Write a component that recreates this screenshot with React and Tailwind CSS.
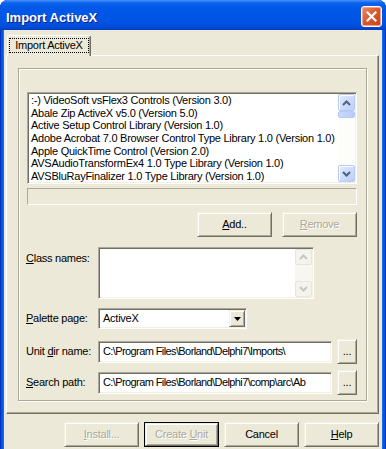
import React from "react";

const RAISED =
  "border border-t-[#F1EFE2] border-l-[#F1EFE2] border-r-[#716F64] border-b-[#716F64] shadow-[inset_1px_1px_0_#ffffff,inset_-1px_-1px_0_#ACA899] bg-[#ECE9D8]";
const SUNKEN =
  "border border-t-[#ACA899] border-l-[#ACA899] border-r-white border-b-white shadow-[inset_1px_1px_0_#716F64,inset_-1px_-1px_0_#F1EFE2]";
const DISABLED = "text-[#ACA899] [text-shadow:1px_1px_0_#ffffff]";

const items = [
  ":-) VideoSoft vsFlex3 Controls (Version 3.0)",
  "Abale Zip ActiveX v5.0 (Version 5.0)",
  "Active Setup Control Library (Version 1.0)",
  "Adobe Acrobat 7.0 Browser Control Type Library 1.0 (Version 1.0)",
  "Apple QuickTime Control (Version 2.0)",
  "AVSAudioTransformEx4 1.0 Type Library (Version 1.0)",
  "AVSBluRayFinalizer 1.0 Type Library (Version 1.0)",
];

function Chevron({ up, color }) {
  return (
    <svg width="9" height="6" viewBox="0 0 9 6">
      <path
        d={up ? "M1 5 L4.5 1.5 L8 5" : "M1 1 L4.5 4.5 L8 1"}
        fill="none"
        stroke={color}
        strokeWidth="2"
      />
    </svg>
  );
}

function XPScrollBtn({ up, disabled, h }) {
  return (
    <div
      className={
        disabled
          ? "w-[17px] flex items-center justify-center rounded-[2px] border border-[#E8E6DC] bg-[#F4F3EE]"
          : "w-[17px] flex items-center justify-center rounded-[2px] border border-[#B7CAF5] bg-[linear-gradient(135deg,#E1EAFE,#BCCFFA)] shadow-[inset_1px_1px_0_#ffffff]"
      }
      style={{ height: h }}
    >
      <Chevron up={up} color={disabled ? "#C9C7BA" : "#4D6185"} />
    </div>
  );
}

function Button({ children, disabled, isDefault, w = "w-[75px]" }) {
  const inner = (
    <div
      className={`${RAISED} flex-1 flex items-center justify-center ${
        disabled ? DISABLED : "text-black"
      }`}
    >
      <span className="whitespace-pre">{children}</span>
    </div>
  );
  if (isDefault) {
    return (
      <div className={`${w} h-[25px] flex border border-black`}>{inner}</div>
    );
  }
  return <div className={`${w} h-[25px] flex`}>{inner}</div>;
}

function U({ children }) {
  return <span className="underline underline-offset-[1px]">{children}</span>;
}

function CloseButton() {
  return (
    <div className="mt-[6px] w-[21px] h-[21px] rounded-[3px] border border-white bg-[linear-gradient(135deg,#EB8D6E_0%,#DC5A33_45%,#C3421C_100%)] flex items-center justify-center shadow-[inset_0_0_0_1px_#F3A488]">
      <svg width="11" height="11" viewBox="0 0 11 11">
        <path d="M1.5 1.5 L9.5 9.5 M9.5 1.5 L1.5 9.5" stroke="#fff" strokeWidth="2.2" strokeLinecap="square" />
      </svg>
    </div>
  );
}

export default function App() {
  return (
    <div className="w-[386px] h-[449px] overflow-hidden bg-white font-['Liberation_Sans',Arial,sans-serif] text-[11px] leading-[13px] text-black tracking-[-0.25px]">
      <div className="h-full flex flex-col rounded-t-[8px] bg-[#0855DD] shadow-[inset_1px_0_0_#0031C4,inset_-1px_0_0_#0031C4]">
        {/* Title bar */}
        <div className="h-[30px] shrink-0 flex items-start justify-between pl-[6px] pr-[4px] rounded-t-[8px] bg-[linear-gradient(180deg,#4A94F8_0px,#0A61EC_3px,#0057E7_10px,#0054E3_22px,#004BD9_27px,#003CC0_30px)]">
          <span className="mt-[10px] text-[13px] leading-[16px] font-bold text-white tracking-normal [text-shadow:1px_1px_0_#0B1E8A]">
            Import ActiveX
          </span>
          <CloseButton />
        </div>

        {/* Client */}
        <div className="flex-1 mx-[4px] bg-[#ECE9D8] flex flex-col shadow-[-1px_0_0_#1C6AEE,1px_0_0_#1C6AEE]">
          {/* Tab strip */}
          <div className="relative z-10 flex pl-[3px] pt-[5px]">
            <div className="w-[84px] h-[21px] -mb-[1px] bg-[#ECE9D8] border-l border-t border-r border-t-white border-l-white border-r-[#716F64] shadow-[inset_-1px_0_0_#ACA899] rounded-t-[2px] flex justify-center pt-[2px]">
              <div className="h-[15px] w-[80px] border border-dotted border-black flex items-center justify-center">
                Import ActiveX
              </div>
            </div>
          </div>

          {/* Page */}
          <div className="ml-[2px] mr-[3px] h-[359px] shrink-0 border border-t-white border-l-white border-r-[#716F64] border-b-[#716F64] shadow-[inset_-1px_-1px_0_#ACA899] pl-[11px] pt-[12px]">
            {/* Group */}
            <div className="w-[349px] h-[333px] border border-[#ACA899] shadow-[1px_1px_0_#ffffff,inset_1px_1px_0_#ffffff] pl-[7px] flex flex-col">
              {/* Listbox */}
              <div className={`${SUNKEN} ml-[1px] mt-[23px] w-[330px] h-[92px] bg-white flex p-[1px]`}>
                <div className="flex-1 overflow-hidden pl-[2px]">
                  {items.map((t) => (
                    <div key={t} className="h-[12.7px] leading-[12.7px] whitespace-nowrap">
                      {t}
                    </div>
                  ))}
                </div>
                <div className="w-[17px] flex flex-col bg-[#FDFDFA]">
                  <XPScrollBtn up h={17} />
                  <div className="h-[7px] rounded-[2px] border border-[#B7CAF5] bg-[linear-gradient(90deg,#C9D8FC,#B8CCF9)]" />
                  <div className="flex-1" />
                  <XPScrollBtn h={17} />
                </div>
              </div>

              {/* Status panel */}
              <div className="ml-[1px] mt-[4px] w-[330px] h-[17px] border border-t-[#ACA899] border-l-[#ACA899] border-r-white border-b-white" />

              {/* Add / Remove */}
              <div className="ml-[1px] mt-[7px] w-[330px] flex justify-end gap-[10px]">
                <Button>
                  <U>A</U>dd..
                </Button>
                <Button disabled>
                  <U>R</U>emove
                </Button>
              </div>

              {/* Class names */}
              <div className="mt-[10px] flex">
                <div className="w-[72px] pt-[5px]">
                  <U>C</U>lass names:
                </div>
                <div className={`${SUNKEN} w-[216px] h-[52px] bg-white flex p-[1px]`}>
                  <div className="flex-1" />
                  <div className="w-[17px] flex flex-col bg-[#F7F6F1]">
                    <XPScrollBtn up disabled h={16} />
                    <div className="flex-1" />
                    <XPScrollBtn disabled h={16} />
                  </div>
                </div>
              </div>

              {/* Palette page */}
              <div className="mt-[9px] flex items-center">
                <div className="w-[72px]">
                  <U>P</U>alette page:
                </div>
                <div className={`${SUNKEN} w-[149px] h-[21px] bg-white flex p-[1px]`}>
                  <div className="flex-1 pl-[3px] flex items-center">ActiveX</div>
                  <div className={`${RAISED} w-[16px] flex items-center justify-center`}>
                    <svg width="7" height="4" viewBox="0 0 7 4">
                      <path d="M0 0 H7 L3.5 4 Z" fill="#000" />
                    </svg>
                  </div>
                </div>
              </div>

              {/* Unit dir name */}
              <div className="mt-[10px] flex items-center">
                <div className="w-[72px]">
                  Unit <U>d</U>ir name:
                </div>
                <div className={`${SUNKEN} w-[234px] h-[22px] bg-white flex items-center pl-[4px] overflow-hidden whitespace-nowrap tracking-[-0.6px]`}>
                  {"C:\\Program Files\\Borland\\Delphi7\\Imports\\"}
                </div>
                <div className="ml-[5px]">
                  <Button w="w-[20px]">...</Button>
                </div>
              </div>

              {/* Search path */}
              <div className="mt-[6px] flex items-center">
                <div className="w-[72px]">
                  <U>S</U>earch path:
                </div>
                <div className={`${SUNKEN} w-[234px] h-[22px] bg-white flex items-center pl-[4px] overflow-hidden whitespace-nowrap tracking-[-0.6px]`}>
                  {"C:\\Program Files\\Borland\\Delphi7\\comp\\arc\\Ab"}
                </div>
                <div className="ml-[5px]">
                  <Button w="w-[20px]">...</Button>
                </div>
              </div>
            </div>
          </div>

          {/* Bottom buttons */}
          <div className="mt-[8px] mr-[3px] flex justify-end gap-[5px]">
            <Button disabled>
              <U>I</U>nstall...
            </Button>
            <Button disabled isDefault>
              Create <U>U</U>nit
            </Button>
            <Button>Cancel</Button>
            <Button>
              <U>H</U>elp
            </Button>
          </div>
        </div>
      </div>
    </div>
  );
}
